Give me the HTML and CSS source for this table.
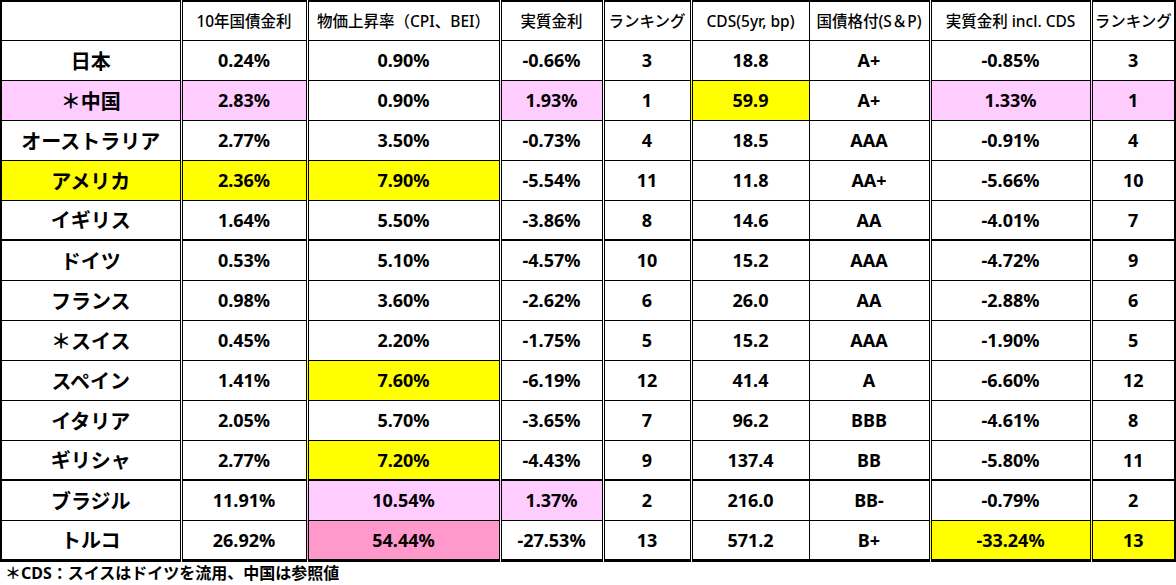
FILE: index.html
```html
<!DOCTYPE html>
<html lang="ja">
<head>
<meta charset="utf-8">
<title>実質金利比較</title>
<link rel="stylesheet" href="styles.css">
</head>
<body>
<table class="rates">
  <colgroup>
    <col class="c1"><col class="c2"><col class="c3"><col class="c4"><col class="c5"><col class="c6"><col class="c7"><col class="c8"><col class="c9">
  </colgroup>
  <thead>
    <tr>
      <th class="dbl"></th>
      <th class="dbl">10年国債金利</th>
      <th class="dbl">物価上昇率（CPI、BEI）</th>
      <th class="dbl">実質金利</th>
      <th class="dbl">ランキング</th>
      <th>CDS(5yr, bp)</th>
      <th class="dbl">国債格付(S＆P)</th>
      <th class="dbl">実質金利 incl. CDS</th>
      <th>ランキング</th>
    </tr>
  </thead>
  <tbody>
    <tr><td class="dbl name">日本</td><td class="dbl">0.24%</td><td class="dbl">0.90%</td><td class="dbl">-0.66%</td><td class="dbl">3</td><td>18.8</td><td class="dbl">A+</td><td class="dbl">-0.85%</td><td>3</td></tr>
    <tr><td class="dbl name pink">＊中国</td><td class="dbl pink">2.83%</td><td class="dbl">0.90%</td><td class="dbl pink">1.93%</td><td class="dbl">1</td><td class="yellow">59.9</td><td class="dbl">A+</td><td class="dbl pink">1.33%</td><td class="pink">1</td></tr>
    <tr><td class="dbl name">オーストラリア</td><td class="dbl">2.77%</td><td class="dbl">3.50%</td><td class="dbl">-0.73%</td><td class="dbl">4</td><td>18.5</td><td class="dbl">AAA</td><td class="dbl">-0.91%</td><td>4</td></tr>
    <tr><td class="dbl name yellow">アメリカ</td><td class="dbl yellow">2.36%</td><td class="dbl yellow">7.90%</td><td class="dbl">-5.54%</td><td class="dbl">11</td><td>11.8</td><td class="dbl">AA+</td><td class="dbl">-5.66%</td><td>10</td></tr>
    <tr><td class="dbl name">イギリス</td><td class="dbl">1.64%</td><td class="dbl">5.50%</td><td class="dbl">-3.86%</td><td class="dbl">8</td><td>14.6</td><td class="dbl">AA</td><td class="dbl">-4.01%</td><td>7</td></tr>
    <tr class="thick"><td class="dbl name">ドイツ</td><td class="dbl">0.53%</td><td class="dbl">5.10%</td><td class="dbl">-4.57%</td><td class="dbl">10</td><td>15.2</td><td class="dbl">AAA</td><td class="dbl">-4.72%</td><td>9</td></tr>
    <tr><td class="dbl name">フランス</td><td class="dbl">0.98%</td><td class="dbl">3.60%</td><td class="dbl">-2.62%</td><td class="dbl">6</td><td>26.0</td><td class="dbl">AA</td><td class="dbl">-2.88%</td><td>6</td></tr>
    <tr><td class="dbl name">＊スイス</td><td class="dbl">0.45%</td><td class="dbl">2.20%</td><td class="dbl">-1.75%</td><td class="dbl">5</td><td>15.2</td><td class="dbl">AAA</td><td class="dbl">-1.90%</td><td>5</td></tr>
    <tr><td class="dbl name">スペイン</td><td class="dbl">1.41%</td><td class="dbl yellow">7.60%</td><td class="dbl">-6.19%</td><td class="dbl">12</td><td>41.4</td><td class="dbl">A</td><td class="dbl">-6.60%</td><td>12</td></tr>
    <tr><td class="dbl name">イタリア</td><td class="dbl">2.05%</td><td class="dbl">5.70%</td><td class="dbl">-3.65%</td><td class="dbl">7</td><td>96.2</td><td class="dbl">BBB</td><td class="dbl">-4.61%</td><td>8</td></tr>
    <tr><td class="dbl name">ギリシャ</td><td class="dbl">2.77%</td><td class="dbl yellow">7.20%</td><td class="dbl">-4.43%</td><td class="dbl">9</td><td>137.4</td><td class="dbl">BB</td><td class="dbl">-5.80%</td><td>11</td></tr>
    <tr class="thick"><td class="dbl name">ブラジル</td><td class="dbl">11.91%</td><td class="dbl pink">10.54%</td><td class="dbl pink">1.37%</td><td class="dbl">2</td><td>216.0</td><td class="dbl">BB-</td><td class="dbl">-0.79%</td><td>2</td></tr>
    <tr class="last"><td class="dbl name">トルコ</td><td class="dbl">26.92%</td><td class="dbl rose">54.44%</td><td class="dbl">-27.53%</td><td class="dbl">13</td><td>571.2</td><td class="dbl">B+</td><td class="dbl yellow">-33.24%</td><td class="yellow">13</td></tr>
  </tbody>
</table>
<p class="note">＊CDS：スイスはドイツを流用、中国は参照値</p>
</body>
</html>
```

FILE: styles.css
```css
html, body {
  margin: 0;
  padding: 0;
  background: #ffffff;
}

body {
  font-family: "Noto Sans", "Noto Sans CJK JP", sans-serif;
  color: #000;
}

.rates {
  width: 1174px;
  table-layout: fixed;
  border-collapse: collapse;
  border: 2px solid #000;
}

.c1 { width: 180px; }
.c2 { width: 126px; }
.c3 { width: 193px; }
.c4 { width: 103px; }
.c5 { width: 88px; }
.c6 { width: 118px; }
.c7 { width: 121px; }
.c8 { width: 161px; }
.c9 { width: 84px; }

.rates th,
.rates td {
  border: 1px solid #000;
  text-align: center;
  vertical-align: middle;
  padding: 0;
  white-space: nowrap;
}

.rates thead tr {
  height: 39px;
}

.rates tbody tr {
  height: 40px;
}

.rates th {
  font-size: 15.5px;
  font-weight: 500;
}

.rates td {
  font-size: 18px;
  font-weight: 700;
}

.rates td.name {
  font-size: 20px;
}

.rates .dbl {
  border-right: 3px double #000;
}

.rates tr.thick td {
  border-top: 2px solid #000;
}

.rates tr.last td {
  border-bottom: 3px solid #000;
}

.pink { background: #ffccff; }
.yellow { background: #ffff00; }
.rose { background: #ff99cc; }

.note {
  margin: 0;
  padding: 1px 0 0 5px;
  font-size: 16px;
  font-weight: 700;
  line-height: 20px;
}
```
